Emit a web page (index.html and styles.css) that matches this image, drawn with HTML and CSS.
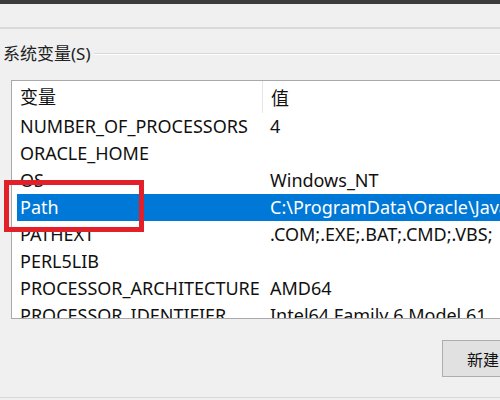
FILE: index.html
```html
<!DOCTYPE html>
<html lang="zh-CN">
<head>
    <meta charset="UTF-8">
    <meta name="viewport" content="width=device-width, initial-scale=1.0">
    <title>环境变量</title>
    <link rel="stylesheet" href="styles.css">
</head>
<body>
    <div class="titlebar"></div>
    <div class="upper-group"></div>

    <div class="group">
        <div class="group-title">
            <span class="label">系统变量(S)</span>
            <span class="rule"></span>
        </div>

        <div class="listbox">
            <div class="list-head">
                <div class="cell name">变量</div>
                <div class="cell value">值</div>
            </div>
            <div class="row">
                <div class="cell name">NUMBER_OF_PROCESSORS</div>
                <div class="cell value">4</div>
            </div>
            <div class="row">
                <div class="cell name">ORACLE_HOME</div>
                <div class="cell value"></div>
            </div>
            <div class="row">
                <div class="cell name">OS</div>
                <div class="cell value">Windows_NT</div>
            </div>
            <div class="row selected">
                <div class="cell name">Path</div>
                <div class="cell value">C:\ProgramData\Oracle\Java</div>
            </div>
            <div class="row">
                <div class="cell name">PATHEXT</div>
                <div class="cell value">.COM;.EXE;.BAT;.CMD;.VBS;</div>
            </div>
            <div class="row">
                <div class="cell name">PERL5LIB</div>
                <div class="cell value"></div>
            </div>
            <div class="row">
                <div class="cell name">PROCESSOR_ARCHITECTURE</div>
                <div class="cell value">AMD64</div>
            </div>
            <div class="row">
                <div class="cell name">PROCESSOR_IDENTIFIER</div>
                <div class="cell value">Intel64 Family 6 Model 61</div>
            </div>
        </div>

        <div class="actions">
            <button class="btn">新建</button>
        </div>
    </div>

    <div class="footer-line"></div>

    <div class="highlight-box"></div>
</body>
</html>
```

FILE: styles.css
```css
body {
    margin: 0;
    padding: 0;
    width: 500px;
    height: 400px;
    overflow: hidden;
    background: #f0f0f0;
    font-family: "Noto Sans", "Noto Sans CJK SC", sans-serif;
    color: #111;
    position: relative;
}

.titlebar {
    height: 4px;
    background: #3c3c3c;
}

.upper-group {
    height: 23px;
    border-bottom: 2px solid #dadada;
}

.group {
    padding-top: 16px;
}

.group-title {
    display: flex;
    align-items: center;
    height: 18px;
    padding-left: 3px;
}

.group-title .label {
    font-size: 17px;
    color: #222;
    line-height: 18px;
    padding-right: 3px;
}

.group-title .rule {
    flex: 1;
    height: 0;
    border-top: 1px solid #d8d8d8;
    border-bottom: 1px solid #ffffff;
}

.listbox {
    margin-top: 17px;
    margin-left: 11px;
    height: 237px;
    background: #fff;
    border: 1px solid #a9a9a9;
    border-right: none;
    overflow: hidden;
}

.list-head,
.row {
    display: flex;
    white-space: nowrap;
    font-size: 18px;
}

.list-head {
    height: 32px;
    align-items: center;
}

.cell {
    flex-shrink: 0;
}

.list-head .name {
    border-right: 1px solid #e5e5e5;
    height: 32px;
    line-height: 32px;
    padding-left: 8px;
    width: 242px;
}

.row {
    height: 27px;
    line-height: 27px;
    margin-left: 5px;
}

.row .name {
    padding-left: 3px;
    width: 242px;
}

.cell.value {
    padding-left: 8px;
}

.row.selected {
    background: #0078d7;
    color: #fff;
}

.actions {
    padding: 21px 0 0 442px;
}

.btn {
    width: 112px;
    height: 37px;
    background: #e1e1e1;
    border: 1px solid #adadad;
    font-family: "Noto Sans CJK SC", sans-serif;
    font-size: 16px;
    color: #111;
    text-align: left;
    padding: 0 0 0 24px;
    white-space: nowrap;
}

.footer-line {
    margin-top: 20px;
    border-top: 1px solid #d8d8d8;
}

.highlight-box {
    position: absolute;
    left: 4px;
    top: 180px;
    width: 130px;
    height: 42px;
    border: 5px solid #e2202a;
}
```
